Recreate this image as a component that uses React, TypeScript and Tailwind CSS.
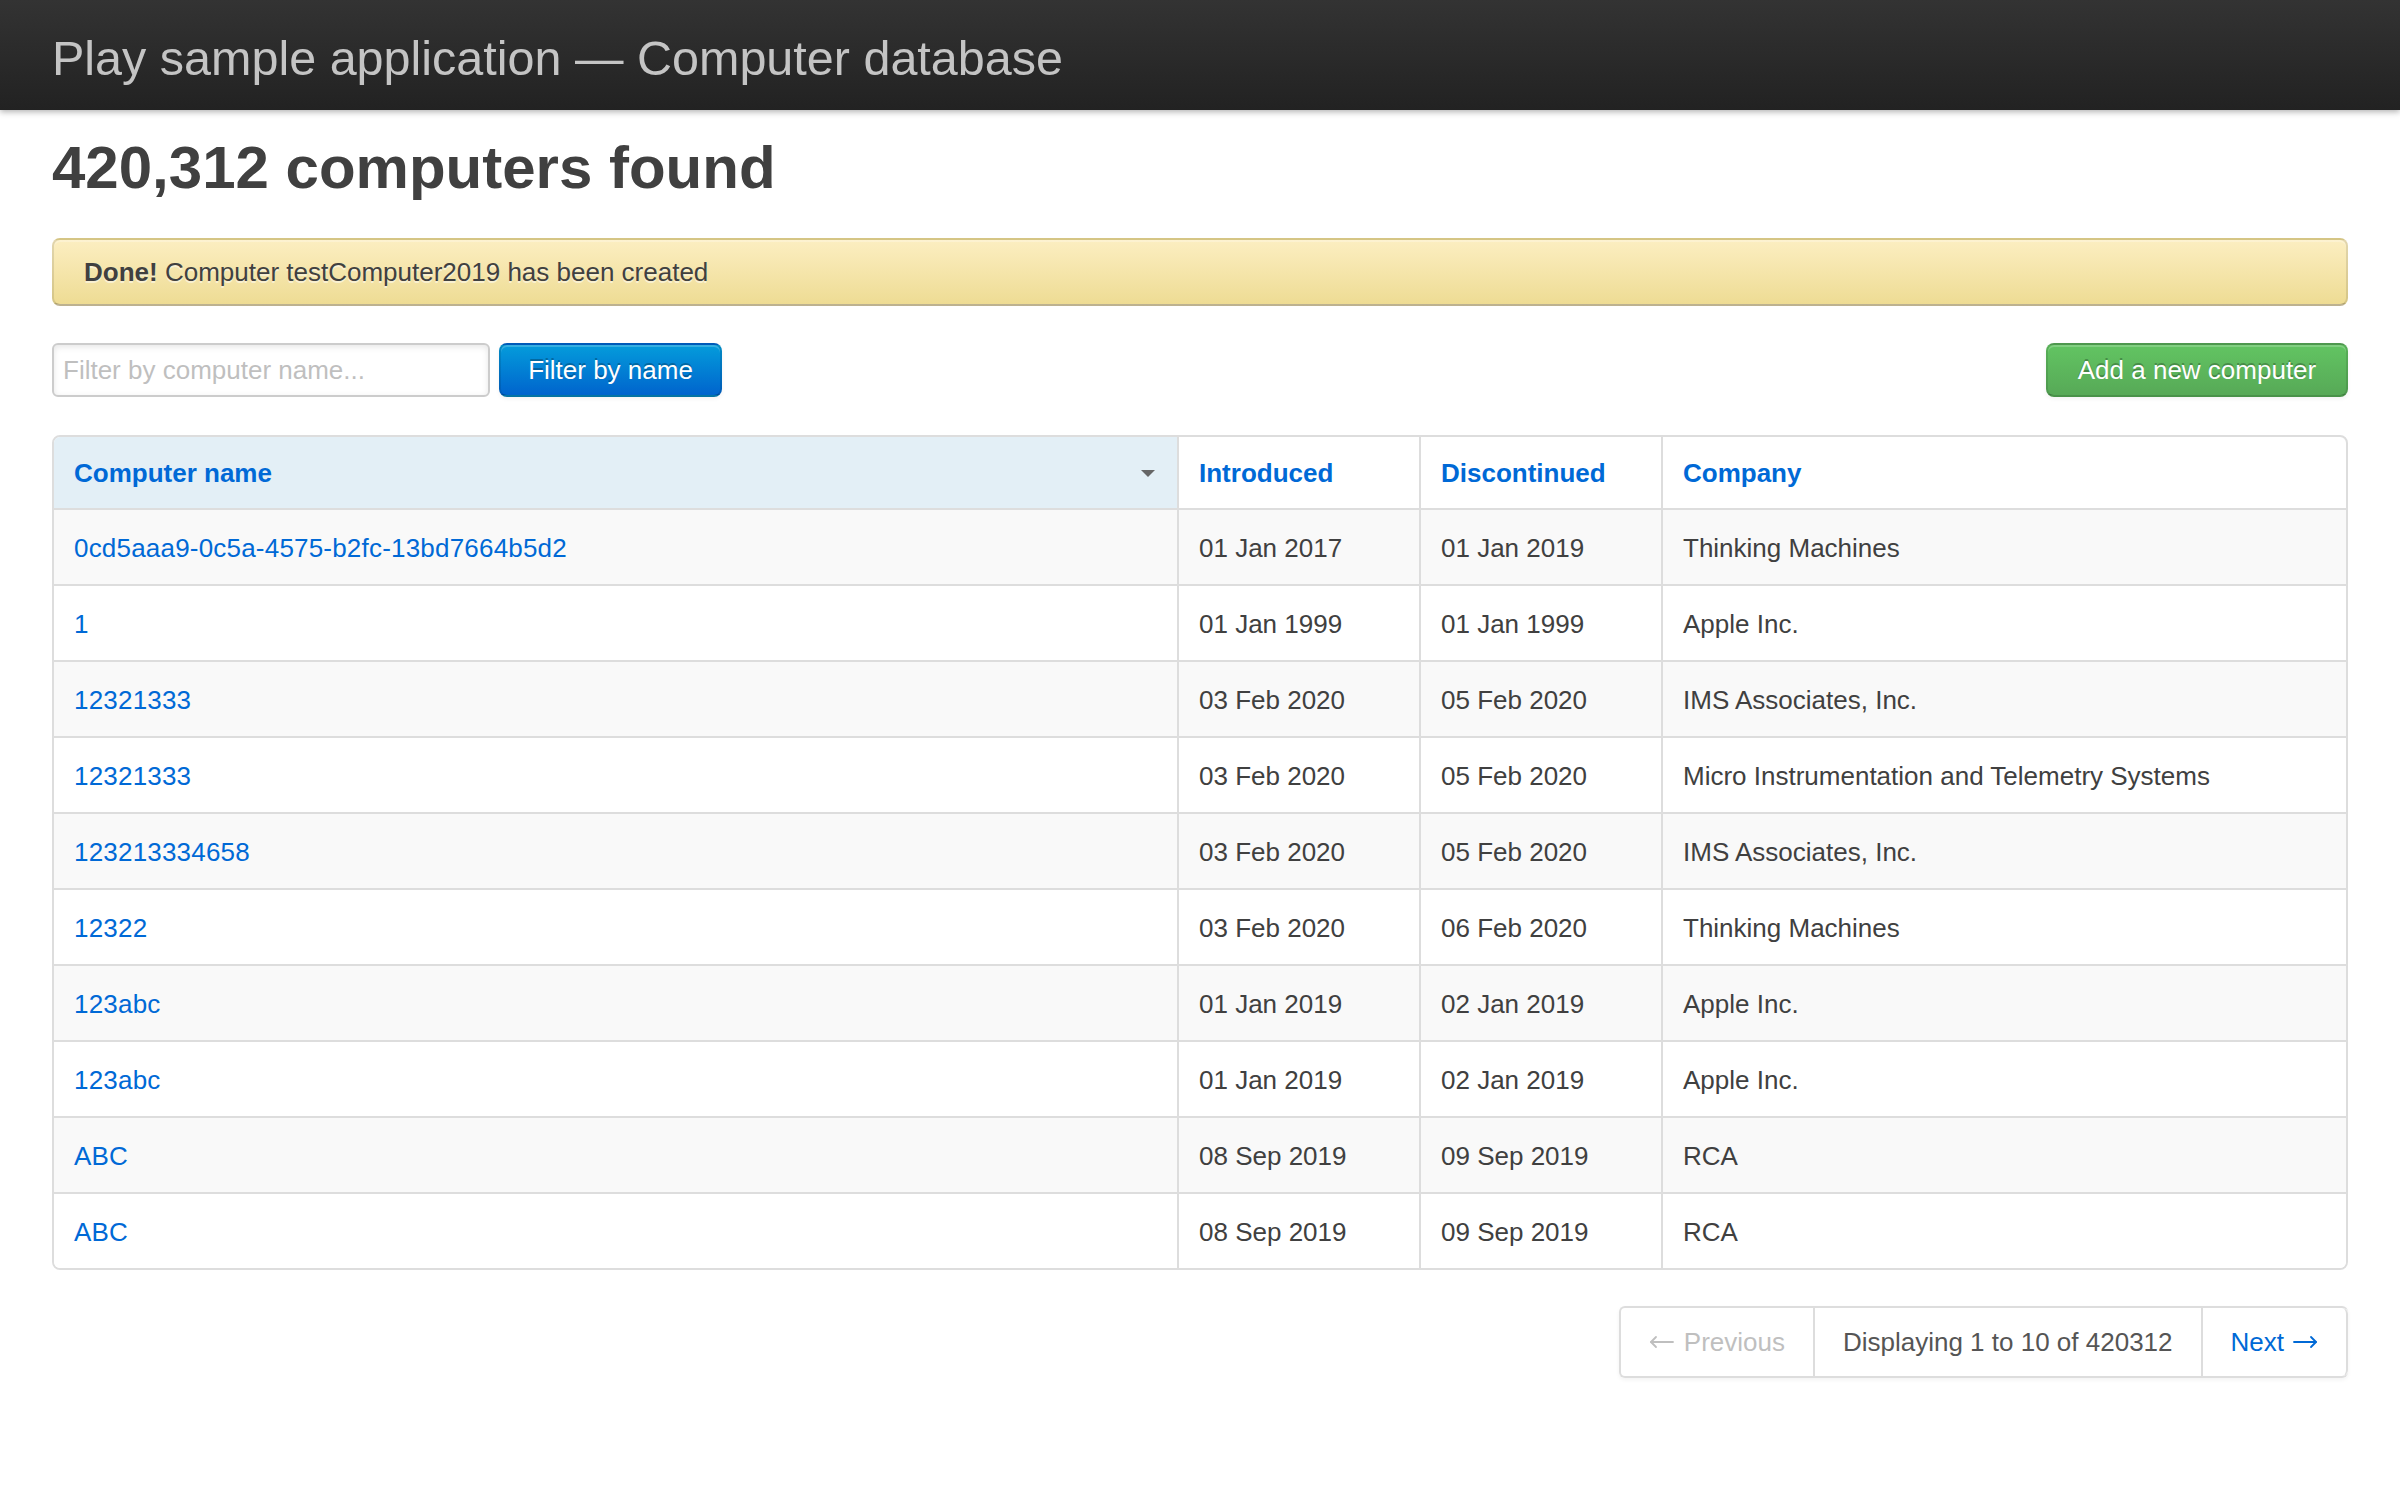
import React from "react";

type Row = { name: string; intro: string; disc: string; company: string };

const rows: Row[] = [
  { name: "0cd5aaa9-0c5a-4575-b2fc-13bd7664b5d2", intro: "01 Jan 2017", disc: "01 Jan 2019", company: "Thinking Machines" },
  { name: "1", intro: "01 Jan 1999", disc: "01 Jan 1999", company: "Apple Inc." },
  { name: "12321333", intro: "03 Feb 2020", disc: "05 Feb 2020", company: "IMS Associates, Inc." },
  { name: "12321333", intro: "03 Feb 2020", disc: "05 Feb 2020", company: "Micro Instrumentation and Telemetry Systems" },
  { name: "123213334658", intro: "03 Feb 2020", disc: "05 Feb 2020", company: "IMS Associates, Inc." },
  { name: "12322", intro: "03 Feb 2020", disc: "06 Feb 2020", company: "Thinking Machines" },
  { name: "123abc", intro: "01 Jan 2019", disc: "02 Jan 2019", company: "Apple Inc." },
  { name: "123abc", intro: "01 Jan 2019", disc: "02 Jan 2019", company: "Apple Inc." },
  { name: "ABC", intro: "08 Sep 2019", disc: "09 Sep 2019", company: "RCA" },
  { name: "ABC", intro: "08 Sep 2019", disc: "09 Sep 2019", company: "RCA" },
];

function Arrow({ dir }: { dir: "left" | "right" }) {
  return (
    <svg
      width="25"
      height="14"
      viewBox="0 0 25 14"
      className="inline-block align-middle"
      fill="none"
      stroke="currentColor"
      strokeWidth="1.8"
      strokeLinecap="round"
      strokeLinejoin="round"
    >
      {dir === "left" ? (
        <>
          <path d="M2 7 H24" />
          <path d="M7 2 L2 7 L7 12" />
        </>
      ) : (
        <>
          <path d="M1 7 H23" />
          <path d="M18 2 L23 7 L18 12" />
        </>
      )}
    </svg>
  );
}

export default function App() {
  return (
    <div className="min-h-[1512px] bg-white font-['Liberation_Sans',Arial,sans-serif] text-[#404040]">
      <header className="relative z-10 h-[110px] bg-[linear-gradient(to_bottom,#333333,#222222)] px-[52px] pt-[6px] shadow-[0_2px_6px_rgba(0,0,0,0.3)]">
        <h1 className="text-[48.5px] leading-[105px] text-[#c4c4c4]">
          Play sample application — Computer database
        </h1>
      </header>

      <main className="px-[52px]">
        <h1 className="mt-[22px] text-[60px] font-bold leading-[72px] text-[#404040]">
          420,312 computers found
        </h1>

        <div className="mt-[34px] rounded-[8px] border-2 border-[rgba(0,0,0,0.1)] border-b-[rgba(0,0,0,0.25)] bg-[linear-gradient(to_bottom,#fceec1,#eedc94)] px-[30px] py-[14px] text-[26px] leading-[36px] text-[#404040] shadow-[inset_0_2px_0_rgba(255,255,255,0.25)] [text-shadow:0_2px_0_rgba(255,255,255,0.5)]">
          <strong className="font-bold">Done!</strong> Computer testComputer2019 has been created
        </div>

        <div className="mt-[37px] flex h-[54px] items-center justify-between">
          <div className="flex items-center gap-[9px]">
            <input
              type="text"
              placeholder="Filter by computer name..."
              className="h-[54px] w-[438px] rounded-[6px] border-2 border-[#cccccc] px-[9px] text-[26px] text-[#808080] shadow-[inset_0_2px_6px_rgba(0,0,0,0.1)] outline-none placeholder:text-[#bfbfbf]"
            />
            <button className="h-[54px] w-[223px] rounded-[8px] border-2 border-[rgba(0,0,0,0.1)] border-b-[rgba(0,0,0,0.25)] bg-[linear-gradient(to_bottom,#049cdb,#0064cd)] text-[26px] text-white shadow-[inset_0_2px_0_rgba(255,255,255,0.2),0_2px_4px_rgba(0,0,0,0.05)] [text-shadow:0_-2px_0_rgba(0,0,0,0.25)]">
              Filter by name
            </button>
          </div>
          <button className="h-[54px] w-[302px] rounded-[8px] border-2 border-[rgba(0,0,0,0.1)] border-b-[rgba(0,0,0,0.25)] bg-[linear-gradient(to_bottom,#62c462,#57a957)] text-[26px] text-white shadow-[inset_0_2px_0_rgba(255,255,255,0.2),0_2px_4px_rgba(0,0,0,0.05)] [text-shadow:0_-2px_0_rgba(0,0,0,0.25)]">
            Add a new computer
          </button>
        </div>

        <table className="mt-[38px] w-full table-fixed border-separate border-spacing-0 rounded-[8px] border-2 border-[#dddddd] text-[26px] leading-[36px]">
          <thead>
            <tr>
              <th className="w-[1123px] rounded-tl-[6px] bg-[#e3eff6] px-[20px] pb-[17px] pt-[18px] text-left font-bold">
                <div className="flex items-center justify-between">
                  <a className="text-[#0069d6]">Computer name</a>
                  <span className="mr-[2px] h-0 w-0 border-x-[7px] border-t-[7px] border-x-transparent border-t-[#666666]" />
                </div>
              </th>
              <th className="w-[242px] border-l-2 border-[#dddddd] px-[20px] pb-[17px] pt-[18px] text-left font-bold">
                <a className="text-[#0069d6]">Introduced</a>
              </th>
              <th className="w-[242px] border-l-2 border-[#dddddd] px-[20px] pb-[17px] pt-[18px] text-left font-bold">
                <a className="text-[#0069d6]">Discontinued</a>
              </th>
              <th className="border-l-2 border-[#dddddd] px-[20px] pb-[17px] pt-[18px] text-left font-bold">
                <a className="text-[#0069d6]">Company</a>
              </th>
            </tr>
          </thead>
          <tbody>
            {rows.map((r, i) => {
              const bg = i % 2 === 0 ? "bg-[#f9f9f9]" : "bg-white";
              const last = i === rows.length - 1;
              return (
                <tr key={i} className={bg}>
                  <td className={`border-t-2 border-[#dddddd] px-[20px] pb-[18px] pt-[20px] ${last ? "rounded-bl-[6px]" : ""}`}>
                    <a className="text-[#0069d6] tracking-[0.2px]">{r.name}</a>
                  </td>
                  <td className="border-l-2 border-t-2 border-[#dddddd] px-[20px] pb-[18px] pt-[20px]">{r.intro}</td>
                  <td className="border-l-2 border-t-2 border-[#dddddd] px-[20px] pb-[18px] pt-[20px]">{r.disc}</td>
                  <td className={`border-l-2 border-t-2 border-[#dddddd] px-[20px] pb-[18px] pt-[20px] ${last ? "rounded-br-[6px]" : ""}`}>{r.company}</td>
                </tr>
              );
            })}
          </tbody>
        </table>

        <div className="mt-[36px] flex justify-end">
          <ul className="flex rounded-[6px] border-2 border-r-0 border-[#dddddd] text-[26px] leading-[68px] shadow-[0_2px_4px_rgba(0,0,0,0.05)]">
            <li className="flex items-center gap-[10px] border-r-2 border-[#dddddd] px-[28px] text-[#bfbfbf]">
              <Arrow dir="left" />
              <span>Previous</span>
            </li>
            <li className="border-r-2 border-[#dddddd] px-[28px] text-[#555555]">Displaying 1 to 10 of 420312</li>
            <li className="flex items-center gap-[9px] rounded-r-[6px] border-r-2 border-[#dddddd] px-[28px] text-[#0069d6]">
              <span>Next</span>
              <Arrow dir="right" />
            </li>
          </ul>
        </div>
      </main>
    </div>
  );
}
